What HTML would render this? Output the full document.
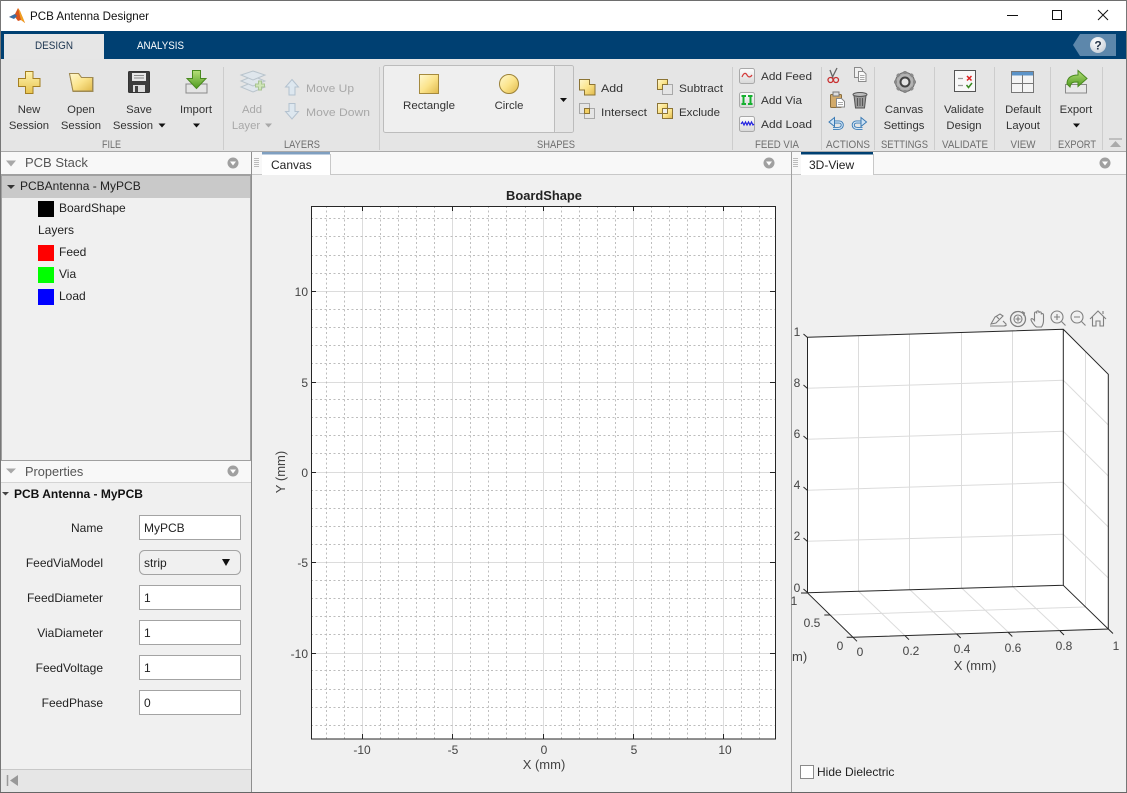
<!DOCTYPE html>
<html><head><meta charset="utf-8"><title>PCB Antenna Designer</title>
<style>
html,body{margin:0;padding:0;background:#f0f0f0;width:1127px;height:793px;overflow:hidden}
svg{display:block;position:absolute;left:0;top:0}
text{font-family:"Liberation Sans",Arial,sans-serif;font-size:11.3px;fill:#333}
.c{text-anchor:middle}.r{text-anchor:end}
.g{fill:#6e6e6e;text-anchor:middle;font-size:11px}
.d{fill:#a8a8a8}
.t{font-size:12px;fill:#222}
.k{font-size:12px;fill:#444}
.p{font-size:12px;fill:#222}
.h{font-size:13px;fill:#555}
</style></head><body>
<svg width="1127" height="793" viewBox="0 0 1127 793" xmlns="http://www.w3.org/2000/svg">
<defs>
<linearGradient id="y" x1="0" y1="0" x2="1" y2="1"><stop offset="0" stop-color="#fff8d0"/><stop offset=".5" stop-color="#fbe48c"/><stop offset="1" stop-color="#e0b94a"/></linearGradient>
<linearGradient id="y2" x1="0" y1="0" x2="0" y2="1"><stop offset="0" stop-color="#fff3b0"/><stop offset="1" stop-color="#e8c44f"/></linearGradient>
<linearGradient id="gr" x1="0" y1="0" x2="0" y2="1"><stop offset="0" stop-color="#b7e07a"/><stop offset="1" stop-color="#4e9a1e"/></linearGradient>
<linearGradient id="btn" x1="0" y1="0" x2="0" y2="1"><stop offset="0" stop-color="#fdfdfd"/><stop offset="1" stop-color="#d8d8d8"/></linearGradient>
<radialGradient id="q" cx=".4" cy=".3" r=".8"><stop offset="0" stop-color="#fff"/><stop offset="1" stop-color="#c4ccd6"/></radialGradient>
</defs>

<!-- base -->
<rect width="1127" height="793" fill="#f0f0f0"/>
<!-- title bar -->
<rect width="1127" height="31" fill="#fff"/>
<rect width="1127" height="1" fill="#6e6e6e"/>
<g>
<path d="M9 17l6-3 3-6 2 3 5 12-4-3-3 1-3-4z" fill="#d9541e"/>
<path d="M9 17l6-3 2 2-3 3z" fill="#3a6fa5"/>
<path d="M18 8l2 3 5 12-4-3z" fill="#f0a020"/>
</g>
<text x="30" y="20" textLength="119" lengthAdjust="spacingAndGlyphs" style="font-size:12px;fill:#111">PCB Antenna Designer</text>
<path d="M1007 15.500h11" stroke="#111" fill="none"/>
<rect x="1052.500" y="10.500" width="9" height="9" fill="none" stroke="#111"/>
<path d="M1098 10l10 10M1108 10l-10 10" stroke="#111" fill="none"/>

<!-- blue bar -->
<rect y="31" width="1127" height="28" fill="#004072"/>
<rect x="4" y="34" width="100" height="25" fill="#e6e6e6"/>
<text x="54" y="49" class="c" textLength="38" lengthAdjust="spacingAndGlyphs" style="font-size:10.600px;fill:#1c3550">DESIGN</text>
<text x="160.500" y="49" class="c" textLength="47" lengthAdjust="spacingAndGlyphs" style="font-size:10.600px;fill:#fff">ANALYSIS</text>
<path d="M1073 45l7-11h36v22h-36z" fill="#5d87ab"/>
<circle cx="1098" cy="45" r="8" fill="url(#q)"/>
<text x="1098" y="49.500" class="c" style="font-size:12px;font-weight:bold;fill:#26364a">?</text>

<!-- toolstrip -->
<rect y="59" width="1127" height="92" fill="#e5e5e5"/>
<rect y="151" width="1127" height="1" fill="#a9a9a9"/>
<path d="M223.500 67v83M379.500 67v83M732.500 67v83M821.500 67v83M874.500 67v83M934.500 67v83M994.500 67v83M1050.500 67v83M1102.500 67v83" stroke="#cdcdcd" fill="none"/>

<!-- FILE icons -->
<path d="M25.500 71.500h7.500v7h7v8h-7v7h-7.500v-7h-7v-8h7z" fill="url(#y2)" stroke="#a47f22"/>
<path d="M69.500 73.500h9l3 4h11.500v14h-20z" fill="#d9c68e" stroke="#9c8a5a"/>
<path d="M69.500 73.500h9l3 4h11v13.500h-19.500z" fill="url(#y)" stroke="#a08a50"/>
<rect x="128.500" y="71.500" width="21" height="21" rx="1" fill="#3d3d3d" stroke="#333"/>
<rect x="132" y="73" width="14" height="8" fill="#e6e6e6"/><path d="M134 75.500h10M134 78h10" stroke="#888"/>
<rect x="133" y="85" width="12" height="7" fill="#ddd"/><rect x="135" y="86" width="3" height="6" fill="#444"/>
<rect x="186" y="84" width="21" height="9" fill="#e4e4e4" stroke="#8a8a8a"/>
<path d="M192.500 70.500h8v8h5.500l-9.500 10-9.500-10h5.500z" fill="url(#gr)" stroke="#4a8a20"/>
<text x="29" y="113" class="c">New</text><text x="29" y="129" class="c">Session</text>
<text x="81" y="113" class="c">Open</text><text x="81" y="129" class="c">Session</text>
<text x="139" y="113" class="c">Save</text><text x="133" y="129" class="c">Session</text>
<path d="M158.500 123.500h7l-3.500 4z" fill="#111"/>
<text x="196" y="113" class="c">Import</text>
<path d="M193 123.500h7l-3.500 4z" fill="#111"/>
<text x="111.500" y="148" class="g" textLength="19" lengthAdjust="spacingAndGlyphs">FILE</text>

<!-- LAYERS -->
<g fill="#dfe6ec" stroke="#b9c4cc">
<path d="M241 87l12-5 12 5-12 5z"/><path d="M241 81l12-5 12 5-12 5z"/><path d="M241 75l12-4 12 4-12 5z"/>
</g>
<path d="M256.500 84h3v-3h3v3h3v3h-3v3h-3v-3h-3z" transform="translate(-1 0)" fill="#cfe6b8" stroke="#a8c492"/>
<text x="252" y="113" class="c d">Add</text><text x="246" y="129" class="c d">Layer</text>
<path d="M265 123.500h7l-3.500 4z" fill="#a8a8a8"/>
<path d="M292 79.500l6.500 7.500H295v8h-6v-8h-3.500z" fill="#dde7ef" stroke="#b4c2cf"/>
<path d="M289 103.500h6v8h3.500L292 119l-6.500-7.500H289z" fill="#dde7ef" stroke="#b4c2cf"/>
<text x="306" y="92" class="d" textLength="48" lengthAdjust="spacingAndGlyphs">Move Up</text>
<text x="306" y="116" class="d" textLength="64" lengthAdjust="spacingAndGlyphs">Move Down</text>
<text x="302" y="148" class="g" textLength="36" lengthAdjust="spacingAndGlyphs">LAYERS</text>

<!-- SHAPES -->
<rect x="383.500" y="65.500" width="190" height="67" rx="2" fill="#efefef" stroke="#bcbcbc"/>
<rect x="555" y="66" width="18" height="66" rx="2" fill="#e5e5e5"/>
<path d="M554.500 66v66" stroke="#bcbcbc"/>
<rect x="419.500" y="74.500" width="19" height="19" fill="url(#y)" stroke="#a58a3e"/>
<circle cx="509" cy="84" r="9.500" fill="url(#y)" stroke="#9c8238"/>
<text x="429" y="109" class="c" textLength="52" lengthAdjust="spacingAndGlyphs">Rectangle</text>
<text x="509" y="109" class="c">Circle</text>
<path d="M560 98h7l-3.500 4z" fill="#111"/>
<!-- add -->
<path d="M579.500 79.500h10v5h5.500v10.500h-10.500v-5h-5z" fill="url(#y)" stroke="#8c7434"/>
<!-- intersect -->
<rect x="579.500" y="103.500" width="10" height="10" fill="none" stroke="#a8a8a8"/>
<rect x="584.500" y="108.500" width="10" height="10" fill="none" stroke="#a8a8a8"/>
<rect x="584.500" y="108.500" width="5" height="5" fill="#f2cf63" stroke="#8c7434"/>
<text x="601" y="92" textLength="22" lengthAdjust="spacingAndGlyphs">Add</text><text x="601" y="116" textLength="46" lengthAdjust="spacingAndGlyphs">Intersect</text>
<!-- subtract -->
<rect x="662.500" y="84.500" width="10" height="10" fill="none" stroke="#a8a8a8"/>
<path d="M657.500 79.500h10v5h-5v5h-5z" fill="url(#y)" stroke="#8c7434"/>
<!-- exclude -->
<rect x="657.500" y="103.500" width="10" height="10" fill="url(#y)" stroke="#8c7434"/>
<rect x="662.500" y="108.500" width="10" height="10" fill="url(#y)" stroke="#8c7434"/>
<rect x="662.500" y="108.500" width="5" height="5" fill="#efefef" stroke="#8c7434"/>
<text x="679" y="92" textLength="44" lengthAdjust="spacingAndGlyphs">Subtract</text><text x="679" y="116" textLength="41" lengthAdjust="spacingAndGlyphs">Exclude</text>
<text x="556" y="148" class="g" textLength="38" lengthAdjust="spacingAndGlyphs">SHAPES</text>

<!-- FEED VIA -->
<rect x="739.500" y="68.500" width="15" height="15" rx="2" fill="url(#btn)" stroke="#a9a9a9"/>
<path d="M742 77c2-5 4-4 5-2s3 3 5 0" fill="none" stroke="#d43a3a" stroke-width="1.200"/>
<rect x="739.500" y="92.500" width="15" height="15" rx="2" fill="url(#btn)" stroke="#a9a9a9"/>
<path d="M741.500 95h4.500v2h-1.500v6H746v2h-4.500v-2h1v-6h-1zM752.500 95H748v2h1.500v6H748v2h4.500v-2h-1v-6h1z" fill="#16b030"/>
<rect x="739.500" y="116.500" width="15" height="15" rx="2" fill="url(#btn)" stroke="#a9a9a9"/>
<path d="M741 124l1.500-2 1.500 3 1.500-3 1.500 3 1.500-3 1.500 3 1.500-3 1.500 3 1-1" fill="none" stroke="#2020e0" stroke-width="1.200"/>
<text x="761" y="80" textLength="51" lengthAdjust="spacingAndGlyphs">Add Feed</text><text x="761" y="104" textLength="41" lengthAdjust="spacingAndGlyphs">Add Via</text><text x="761" y="128" textLength="51" lengthAdjust="spacingAndGlyphs">Add Load</text>
<text x="777" y="148" class="g" textLength="44" lengthAdjust="spacingAndGlyphs">FEED VIA</text>

<!-- ACTIONS -->
<g fill="none">
<path d="M837 68l-5 10M830 70l3 8" stroke="#666" stroke-width="1.300"/>
<circle cx="830.500" cy="80" r="2.500" stroke="#c83030" stroke-width="1.300"/><circle cx="836" cy="80" r="2.500" stroke="#c83030" stroke-width="1.300"/>
</g>
<path d="M854.500 67.500h6l2 2v8h-8z" fill="#f0f0f0" stroke="#8a8a8a"/>
<path d="M858.500 71.500h5l2.500 2.500v7.500h-7.500z" fill="#fafafa" stroke="#8a8a8a"/>
<path d="M860 75.500h4.500M860 77.500h4.500M860 79.500h4.500" stroke="#aaa"/>
<rect x="830.500" y="94.500" width="11" height="13" rx="1" fill="#d2aa6a" stroke="#8a6d3c"/>
<rect x="833" y="92" width="6" height="4" fill="#ddd" stroke="#777"/>
<path d="M836.500 98.500h5l3 3v5.500h-8z" fill="#fff" stroke="#888"/>
<path d="M838 102.500h5M838 104.500h5" stroke="#aaa"/>
<path d="M854 95.500h12l-1.500 12.500h-9z" fill="#9a9a9a" stroke="#555"/>
<ellipse cx="860" cy="94.500" rx="7" ry="2" fill="#bcbcbc" stroke="#555"/>
<path d="M857.500 98v8M860 98v8M862.500 98v8" stroke="#555"/>
<!-- undo / redo -->
<g fill="none" stroke-linecap="butt">
<path d="M834 122h5c4.500 0 4.500 6.500-1 6.500h-5" stroke="#3a7ab4" stroke-width="3"/>
<path d="M834 122h5c4.500 0 4.500 6.500-1 6.500h-5" stroke="#d4e6f6" stroke-width="1.200"/>
<path d="M861.500 122h-5c-4.500 0-4.500 6.500 1 6.500h5" stroke="#3a7ab4" stroke-width="3"/>
<path d="M861.500 122h-5c-4.500 0-4.500 6.500 1 6.500h5" stroke="#d4e6f6" stroke-width="1.200"/>
</g>
<path d="M829 122l5.500-4.500v9z" fill="#cfe3f5" stroke="#3a7ab4"/>
<path d="M866.500 122l-5.500-4.500v9z" fill="#cfe3f5" stroke="#3a7ab4"/>
<text x="848" y="148" class="g" textLength="44" lengthAdjust="spacingAndGlyphs">ACTIONS</text>

<!-- SETTINGS -->
<circle cx="905" cy="82" r="9.500" fill="#a8a8a8" stroke="#6a6a6a" stroke-width="1"/>
<path d="M905 71v22M894 82h22M897.200 74.200l15.600 15.600M912.800 74.200l-15.600 15.600" stroke="#8a8a8a" stroke-width="3"/>
<circle cx="905" cy="82" r="8" fill="#b4b4b4"/>
<circle cx="905" cy="82" r="5.500" fill="#444"/><circle cx="905" cy="82" r="3.500" fill="#e4e4e4"/>
<text x="904" y="113" class="c">Canvas</text><text x="904" y="129" class="c">Settings</text>
<text x="904.500" y="148" class="g" textLength="47" lengthAdjust="spacingAndGlyphs">SETTINGS</text>

<!-- VALIDATE -->
<rect x="954.500" y="70.500" width="21" height="21" fill="#f8f8f8" stroke="#555"/>
<path d="M958 78.500h5M958 85.500h5" stroke="#999" stroke-width="1.200"/>
<path d="M967 76l4.500 4.500M971.500 76l-4.500 4.500" stroke="#d22" stroke-width="1.500"/>
<path d="M966.500 85l2 2.500 3.500-4.500" fill="none" stroke="#3a8a20" stroke-width="1.500"/>
<text x="964" y="113" class="c">Validate</text><text x="964" y="129" class="c">Design</text>
<text x="965" y="148" class="g" textLength="46" lengthAdjust="spacingAndGlyphs">VALIDATE</text>

<!-- VIEW -->
<rect x="1011.500" y="71.500" width="22" height="21" fill="#f4f4f4" stroke="#777"/>
<rect x="1012" y="72" width="21" height="3.500" fill="#5b93c8"/>
<path d="M1011.500 83.500h22M1022.500 75v17" stroke="#777"/>
<text x="1023" y="113" class="c">Default</text><text x="1023" y="129" class="c">Layout</text>
<text x="1023" y="148" class="g" textLength="25" lengthAdjust="spacingAndGlyphs">VIEW</text>

<!-- EXPORT -->
<rect x="1065.500" y="84.500" width="21" height="8.500" fill="#e8e8e8" stroke="#8a8a8a"/>
<path d="M1067 84c0-7 5-9 11-9v-4.500l9 8-9 8V82c-5 0-7 0-8 5z" fill="url(#gr)" stroke="#4a8a20"/>
<text x="1076" y="113" class="c">Export</text>
<path d="M1073 123.500h7l-3.500 4z" fill="#111"/>
<text x="1077" y="148" class="g" textLength="38" lengthAdjust="spacingAndGlyphs">EXPORT</text>
<path d="M1109 139h13" stroke="#999"/><path d="M1110 147l5.500-6 5.500 6z" fill="#aaa"/>

<!-- PCB Stack panel -->
<rect x="1" y="152" width="250" height="23" fill="#f8f8f8"/>
<path d="M6 160.500h10l-5 6z" fill="#a8a8a8"/>
<text x="25" y="167" class="h" style="font-size:13px">PCB Stack</text>
<circle cx="233" cy="163" r="5.500" fill="#a0a0a0"/><path d="M230 161.500h6l-3 4z" fill="#fff"/>
<rect x="1" y="175" width="250" height="286" fill="#f0f0f0" stroke="#a0a0a0" stroke-width="2"/>
<rect x="2" y="176" width="248" height="22" fill="#c9c9c9"/>
<path d="M7 185h8l-4 4z" fill="#333"/>
<text x="20" y="190" class="t">PCBAntenna - MyPCB</text>
<rect x="38" y="201" width="16" height="16" fill="#000"/>
<text x="59" y="212" class="t">BoardShape</text>
<text x="38" y="234" class="t">Layers</text>
<rect x="38" y="245" width="16" height="16" fill="#f00"/>
<text x="59" y="256" class="t">Feed</text>
<rect x="38" y="267" width="16" height="16" fill="#0f0"/>
<text x="59" y="278" class="t">Via</text>
<rect x="38" y="289" width="16" height="16" fill="#00f"/>
<text x="59" y="300" class="t">Load</text>

<!-- Properties panel -->
<rect x="1" y="461" width="250" height="21" fill="#f8f8f8"/>
<path d="M1 482.500h250" stroke="#d4d4d4"/>
<path d="M6 468.500h10l-5 5z" fill="#a8a8a8"/>
<text x="25" y="476" class="h" style="font-size:12.800px">Properties</text>
<circle cx="233" cy="471" r="5.500" fill="#a0a0a0"/><path d="M230 469.500h6l-3 4z" fill="#fff"/>
<path d="M2 492h7l-3.500 3.500z" fill="#444"/>
<text x="14" y="498" class="p" style="font-weight:bold;fill:#111">PCB Antenna - MyPCB</text>
<g fill="#fff" stroke="#a3a3a3">
<rect x="139.500" y="515.500" width="101" height="24"/>
<rect x="139.500" y="550.500" width="101" height="24" rx="5" fill="#f0f0f0"/>
<rect x="139.500" y="585.500" width="101" height="24"/>
<rect x="139.500" y="620.500" width="101" height="24"/>
<rect x="139.500" y="655.500" width="101" height="24"/>
<rect x="139.500" y="690.500" width="101" height="24"/>
</g>
<g class="lab">
<text x="103" y="532" class="r p">Name</text>
<text x="103" y="567" class="r p">FeedViaModel</text>
<text x="103" y="602" class="r p">FeedDiameter</text>
<text x="103" y="637" class="r p">ViaDiameter</text>
<text x="103" y="672" class="r p">FeedVoltage</text>
<text x="103" y="707" class="r p">FeedPhase</text>
<text x="144" y="532" class="p">MyPCB</text>
<text x="144" y="567" class="p">strip</text>
<text x="144" y="602" class="p">1</text>
<text x="144" y="637" class="p">1</text>
<text x="144" y="672" class="p">1</text>
<text x="144" y="707" class="p">0</text>
</g>
<path d="M222 559h8l-4 7z" fill="#111"/>
<rect x="1" y="769" width="250" height="23" fill="#e6e6e6"/>
<path d="M1 769.500h250" stroke="#c8c8c8"/>
<path d="M7.500 775v11" stroke="#999" stroke-width="1.500"/><path d="M18 775l-8 5.500 8 5.500z" fill="#999"/>
<path d="M251.500 152v640" stroke="#8f8f8f"/>

<!-- Canvas tab -->
<rect x="252" y="152" width="539" height="23" fill="#f8f8f8"/>
<path d="M252 174.500h539" stroke="#c8c8c8"/>
<path d="M254 158.500h5M254 160.500h5M254 162.500h5M254 164.500h5M254 166.500h5" stroke="#bbb"/>
<rect x="262" y="152" width="68" height="23" fill="#fff"/>
<rect x="262" y="152" width="68" height="2.500" fill="#7f9fc0"/>
<path d="M330.500 154v21" stroke="#c8c8c8"/>
<text x="271" y="169" class="t">Canvas</text>
<circle cx="769" cy="163" r="5.500" fill="#a0a0a0"/><path d="M766 161.500h6l-3 4z" fill="#fff"/>

<!-- 3D tab -->
<rect x="792" y="152" width="335" height="23" fill="#f8f8f8"/>
<path d="M792 174.500h335" stroke="#c8c8c8"/>
<path d="M793 158.500h5M793 160.500h5M793 162.500h5M793 164.500h5M793 166.500h5" stroke="#bbb"/>
<rect x="801" y="152" width="72" height="23" fill="#fff"/>
<rect x="801" y="152" width="72" height="2.500" fill="#004072"/>
<path d="M873.500 154v21" stroke="#c8c8c8"/>
<text x="809" y="169" class="t">3D-View</text>
<circle cx="1105" cy="163" r="5.500" fill="#a0a0a0"/><path d="M1102 161.500h6l-3 4z" fill="#fff"/>
<path d="M791.500 152v640" stroke="#a0a0a0"/>

<!-- 2D axes -->
<rect x="311" y="206" width="464" height="533" fill="#fff"/>
<path d="M362.500 206v533M452.500 206v533M543.500 206v533M633.500 206v533M723.500 206v533M311 291.500h464M311 382.500h464M311 472.500h464M311 562.500h464M311 653.500h464" stroke="#dcdcdc" fill="none"/>
<path d="M326.500 206v533M344.500 206v533M380.500 206v533M398.500 206v533M416.500 206v533M434.500 206v533M470.500 206v533M488.500 206v533M506.500 206v533M525.500 206v533M561.500 206v533M579.500 206v533M597.500 206v533M615.500 206v533M651.500 206v533M669.500 206v533M687.500 206v533M705.500 206v533M741.500 206v533M759.500 206v533" stroke="#bdbdbd" stroke-dasharray="2 2.500" fill="none"/>
<path d="M311 218.500h464M311 236.500h464M311 255.500h464M311 273.500h464M311 309.500h464M311 327.500h464M311 345.500h464M311 363.500h464M311 399.500h464M311 417.500h464M311 435.500h464M311 453.500h464M311 490.500h464M311 508.500h464M311 526.500h464M311 544.500h464M311 580.500h464M311 598.500h464M311 616.500h464M311 634.500h464M311 670.500h464M311 689.500h464M311 707.500h464M311 725.500h464" stroke="#bdbdbd" stroke-dasharray="2 2.500" fill="none"/>
<path d="M362.500 206v5M452.500 206v5M543.500 206v5M633.500 206v5M723.500 206v5M362.500 739v-5M452.500 739v-5M543.500 739v-5M633.500 739v-5M723.500 739v-5M311 291.500h5M311 382.500h5M311 472.500h5M311 562.500h5M311 653.500h5M775 291.500h-5M775 382.500h-5M775 472.500h-5M775 562.500h-5M775 653.500h-5" stroke="#262626" fill="none"/>
<rect x="311.500" y="206.500" width="464" height="532.500" fill="none" stroke="#262626"/>
<text x="544" y="200" class="c" textLength="76" lengthAdjust="spacingAndGlyphs" style="font-size:12.500px;font-weight:bold;fill:#222">BoardShape</text>
<text x="308" y="296" class="r k">10</text><text x="308" y="387" class="r k">5</text><text x="308" y="477" class="r k">0</text><text x="308" y="567" class="r k">-5</text><text x="308" y="658" class="r k">-10</text>
<text x="362" y="754" class="c k">-10</text><text x="453" y="754" class="c k">-5</text><text x="544" y="754" class="c k">0</text><text x="634" y="754" class="c k">5</text><text x="725" y="754" class="c k">10</text>
<text x="544" y="769" class="c" style="font-size:13px;fill:#444">X (mm)</text>
<text transform="translate(285 472) rotate(-90)" class="c" style="font-size:13px;fill:#444">Y (mm)</text>

<!-- 3D axes -->
<path d="M807.300 337.300L1063.300 329.300V585.300L807.300 592.700z" fill="#fff"/>
<path d="M1063.300 329.300L1108.300 374.300V629L1063.300 585.300z" fill="#fff"/>
<path d="M807.300 592.700L1063.300 585.300L1108.300 629L853 637.300z" fill="#fff"/>
<g stroke="#dcdcdc" fill="none">
<path d="M858.500 336v255M909.500 334v255.500M961.500 333v255M1012.500 331v255.500"/>
<path d="M807.300 388.300L1063.300 380.300M807.300 439.300L1063.300 431.300M807.300 490.300L1063.300 482.300M807.300 541.300L1063.300 534.300"/>
<path d="M1085.500 352v255M1063.300 380.300L1108.300 425M1063.300 431.300L1108.300 476M1063.300 482.300L1108.300 527M1063.300 534.300L1108.300 578"/>
<path d="M858.300 591L905 635.700M909.700 589.500L956.700 634M961.700 588L1008.700 632.500M1012.700 586.500L1060 631M830 615L1085.300 607"/>
</g>
<g stroke="#262626" fill="none">
<path d="M807.500 337.300L1063.300 329.300L1108.300 374.300V629"/>
<path d="M807.500 337.300V592.700L1063.300 585.300V329.300"/>
<path d="M1063.300 585.300L1108.300 629L853 637.300L807.300 592.700"/>
<path d="M803.500 334l4 3.500M803.500 385l4 3.500M803.500 436l4 3.500M803.500 487l4 3.500M803.500 538l4 3.500M803.500 589l4 3.500"/>
<path d="M801 593h6.300M824.300 615h6M846.700 637.300h6.300"/>
<path d="M853 637.300l4 4M905 635.700l4 4M956.700 634l4 4M1008.300 632.500l4 4M1060 631l4 4M1108.300 629l4.700 4.500"/>
</g>
<g class="k" style="font-size:12px">
<text x="797" y="336" class="c k">1</text><text x="797" y="387" class="c k">8</text><text x="797" y="438" class="c k">6</text><text x="797" y="489" class="c k">4</text><text x="797" y="540" class="c k">2</text><text x="797" y="592" class="c k">0</text>
<text x="794" y="605" class="c k">1</text><text x="812" y="627" class="c k">0.5</text><text x="840" y="650" class="c k">0</text>
<text x="860" y="656" class="c k">0</text><text x="911" y="655" class="c k">0.2</text><text x="962" y="653" class="c k">0.4</text><text x="1013" y="652" class="c k">0.6</text><text x="1064" y="650" class="c k">0.8</text><text x="1116" y="650" class="c k">1</text>
</g>
<text x="975" y="670" class="c" style="font-size:13px;fill:#444">X (mm)</text>
<text x="792" y="661" style="font-size:13px;fill:#444">m)</text>
<rect x="791" y="640" width="1" height="30" fill="#a0a0a0"/>
<rect x="800.500" y="765.500" width="13" height="13" fill="#fff" stroke="#8a8a8a"/>
<text x="817" y="776" class="p">Hide Dielectric</text>

<!-- axes toolbar -->
<g fill="none" stroke="#808080" stroke-width="1.100">
<path d="M991 324l4-7 5-3 3 2-7 7zM996 316l3 3M990 326h15v-1M1003 321l3 3v2"/>
<circle cx="1018" cy="319" r="7.500" stroke-width="1.300"/><circle cx="1018" cy="319" r="4"/><path d="M1018 316.500v5M1015.500 319h5"/>
<path d="M1022 311.500l2.500 1.500-1 2.500"/>
<path d="M1036.500 327c-2-1-5.500-6-5.500-7.500s2-1 3.500 1v-7c0-2 2-2 2.200 0v-1.500c0-1.500 2.200-1.500 2.300 0v1c0-1.500 2.200-1.500 2.300 0v1.500c0-1.500 2.200-1.200 2.200.5v5.500c0 3-1 5-2 6.500z"/>
<circle cx="1057" cy="317" r="6"/><path d="M1061.500 321.500l4 4M1054 317h6M1057 314v6"/>
<circle cx="1077" cy="317" r="6"/><path d="M1081.500 321.500l4 4M1074 317h6"/>
<path d="M1090 319l8-8 8 8M1092.500 317v9h3.500v-5h4v5h3.500v-9M1103 311v3"/>
</g>

<!-- window edges -->
<path d="M.5 0v793M1126.500 0v793" stroke="#777"/>
<path d="M0 792.500h1127" stroke="#666"/>
</svg>
</body></html>
